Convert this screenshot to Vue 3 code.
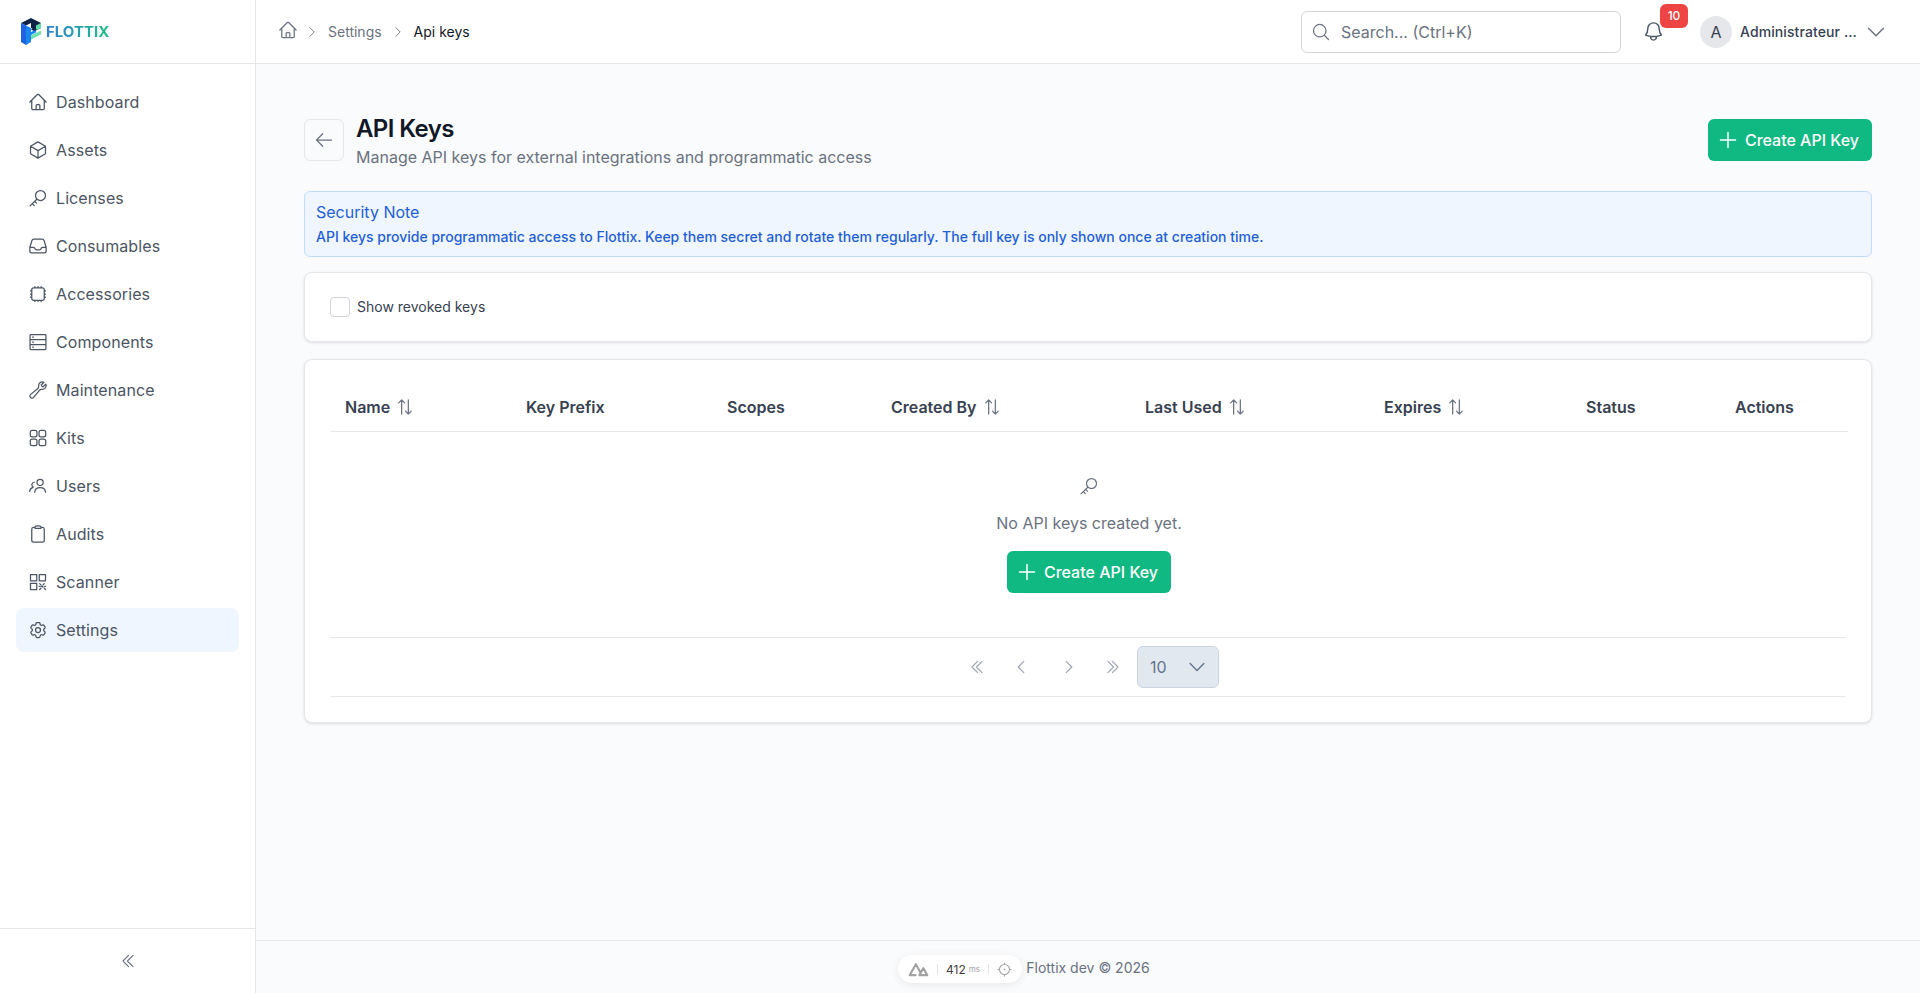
<script setup>
import { ref } from 'vue'

const nav = [
  { label: 'Dashboard', icon: 'home' },
  { label: 'Assets', icon: 'cube' },
  { label: 'Licenses', icon: 'key' },
  { label: 'Consumables', icon: 'inbox' },
  { label: 'Accessories', icon: 'chip' },
  { label: 'Components', icon: 'stack' },
  { label: 'Maintenance', icon: 'wrench' },
  { label: 'Kits', icon: 'grid' },
  { label: 'Users', icon: 'users' },
  { label: 'Audits', icon: 'clipboard' },
  { label: 'Scanner', icon: 'qr' },
  { label: 'Settings', icon: 'cog', active: true }
]

const icons = {
  home: 'm2.25 12 8.954-8.955c.44-.439 1.152-.439 1.591 0L21.75 12M4.5 9.75v10.125c0 .621.504 1.125 1.125 1.125H9.75v-4.875c0-.621.504-1.125 1.125-1.125h2.25c.621 0 1.125.504 1.125 1.125V21h4.125c.621 0 1.125-.504 1.125-1.125V9.75M8.25 21h8.25',
  cube: 'm21 7.5-9-5.25L3 7.5m18 0-9 5.25m9-5.25v9l-9 5.25M3 7.5l9 5.25M3 7.5v9l9 5.25m0-9v9',
  key: 'M15 3a6 6 0 1 1 0 12 6 6 0 0 1 0-12ZM10.8 13.2 2.5 21.5M5.2 18.8l2.2 2.2M8 16l2.2 2.2',
  inbox: 'M2.25 13.5h3.86a2.25 2.25 0 0 1 2.012 1.244l.256.512a2.25 2.25 0 0 0 2.013 1.244h3.218a2.25 2.25 0 0 0 2.013-1.244l.256-.512a2.25 2.25 0 0 1 2.013-1.244h3.859m-19.5.338V18a2.25 2.25 0 0 0 2.25 2.25h15A2.25 2.25 0 0 0 21.75 18v-4.162c0-.224-.034-.447-.1-.661L19.24 5.338a2.25 2.25 0 0 0-2.15-1.588H6.911a2.25 2.25 0 0 0-2.15 1.588L2.35 13.177a2.25 2.25 0 0 0-.1.661Z',
  chip: 'M8.25 3v1.5M4.5 8.25H3m18 0h-1.5M4.5 12H3m18 0h-1.5m-15 3.75H3m18 0h-1.5M8.25 19.5V21M12 3v1.5m0 15V21m3.75-18v1.5m0 15V21m-9-1.5h10.5a2.25 2.25 0 0 0 2.25-2.25V6.75a2.25 2.25 0 0 0-2.25-2.25H6.75A2.25 2.25 0 0 0 4.5 6.75v10.5a2.25 2.25 0 0 0 2.25 2.25Z',
  stack: 'M3.5 3h17a1 1 0 0 1 1 1v16a1 1 0 0 1-1 1h-17a1 1 0 0 1-1-1V4a1 1 0 0 1 1-1ZM2.5 9h19M2.5 15h19M5.5 6h1M5.5 12h1M5.5 18h1',
  wrench: 'M21.75 6.75a4.5 4.5 0 0 1-4.884 4.484c-1.076-.091-2.264.071-2.95.904l-7.152 8.684a2.548 2.548 0 1 1-3.586-3.586l8.684-7.152c.833-.686.995-1.874.904-2.95a4.5 4.5 0 0 1 6.336-4.486l-3.276 3.276a3.004 3.004 0 0 0 2.25 2.25l3.276-3.276c.256.565.398 1.192.398 1.852Z',
  grid: 'M5 2.75h3.5a2.25 2.25 0 0 1 2.25 2.25v3.5a2.25 2.25 0 0 1-2.25 2.25H5A2.25 2.25 0 0 1 2.75 8.5V5A2.25 2.25 0 0 1 5 2.75ZM15.5 2.75H19A2.25 2.25 0 0 1 21.25 5v3.5A2.25 2.25 0 0 1 19 10.75h-3.5a2.25 2.25 0 0 1-2.25-2.25V5a2.25 2.25 0 0 1 2.25-2.25ZM5 13.25h3.5a2.25 2.25 0 0 1 2.25 2.25V19a2.25 2.25 0 0 1-2.25 2.25H5A2.25 2.25 0 0 1 2.75 19v-3.5A2.25 2.25 0 0 1 5 13.25ZM15.5 13.25H19a2.25 2.25 0 0 1 2.25 2.25V19A2.25 2.25 0 0 1 19 21.25h-3.5A2.25 2.25 0 0 1 13.25 19v-3.5a2.25 2.25 0 0 1 2.25-2.25Z',
  users: 'M14.5 4a3.75 3.75 0 1 1 0 7.5 3.75 3.75 0 0 1 0-7.5ZM8 19.5c.3-3.6 3-5.5 6.5-5.5s6.2 1.9 6.5 5.5M7.5 7.5a3 3 0 0 0-1.2 5.7M2 18.5c.2-2.4 1.5-4 3.5-4.6',
  clipboard: 'M15.666 3.888A2.25 2.25 0 0 0 13.5 2.25h-3c-1.03 0-1.9.693-2.166 1.638m7.332 0c.055.194.084.4.084.612v0a.75.75 0 0 1-.75.75H9a.75.75 0 0 1-.75-.75v0c0-.212.03-.418.084-.612m7.332 0c.646.049 1.288.11 1.927.184 1.1.128 1.907 1.077 1.907 2.185V19.5a2.25 2.25 0 0 1-2.25 2.25H6.75A2.25 2.25 0 0 1 4.5 19.5V6.257c0-1.108.806-2.057 1.907-2.185a48.208 48.208 0 0 1 1.927-.184',
  qr: 'M3 3h7.5v7.5H3ZM13.5 3H21v7.5h-7.5ZM3 13.5h7.5V21H3ZM14 14l1.5 1.5M19.5 14 18 15.5M16.75 16.75 16 17.5M17.25 17.25 18 18M14 21l1.5-1.5M21 21l-1.5-1.5M13.5 17.25h1M20 17.25h1',
  cog: 'M9.594 3.94c.09-.542.56-.94 1.11-.94h2.593c.55 0 1.02.398 1.11.94l.213 1.281c.063.374.313.686.645.87.074.04.147.083.22.127.325.196.72.257 1.075.124l1.217-.456a1.125 1.125 0 0 1 1.37.49l1.296 2.247a1.125 1.125 0 0 1-.26 1.431l-1.003.827c-.293.241-.438.613-.43.992a7.723 7.723 0 0 1 0 .255c-.008.378.137.75.43.991l1.004.827c.424.35.534.955.26 1.43l-1.298 2.247a1.125 1.125 0 0 1-1.369.491l-1.217-.456c-.355-.133-.75-.072-1.076.124a6.47 6.47 0 0 1-.22.128c-.331.183-.581.495-.644.869l-.213 1.281c-.09.543-.56.94-1.11.94h-2.594c-.55 0-1.019-.398-1.11-.94l-.213-1.281c-.062-.374-.312-.686-.644-.87a6.52 6.52 0 0 1-.22-.127c-.325-.196-.72-.257-1.076-.124l-1.217.456a1.125 1.125 0 0 1-1.369-.49l-1.297-2.247a1.125 1.125 0 0 1 .26-1.431l1.004-.827c.292-.24.437-.613.43-.991a6.932 6.932 0 0 1 0-.255c.007-.38-.138-.751-.43-.992l-1.004-.827a1.125 1.125 0 0 1-.26-1.43l1.297-2.247a1.125 1.125 0 0 1 1.37-.491l1.216.456c.356.133.751.072 1.076-.124.072-.044.146-.086.22-.128.332-.183.582-.495.644-.869l.214-1.28ZM15 12a3 3 0 1 1-6 0 3 3 0 0 1 6 0Z',
  bell: 'M14.857 17.082a23.848 23.848 0 0 0 5.454-1.31A8.967 8.967 0 0 1 18 9.75V9A6 6 0 0 0 6 9v.75a8.967 8.967 0 0 1-2.312 6.022c1.733.64 3.56 1.085 5.455 1.31m5.714 0a24.255 24.255 0 0 1-5.714 0m5.714 0a3 3 0 1 1-5.714 0',
  search: 'm21 21-5.197-5.197m0 0A7.5 7.5 0 1 0 5.196 5.196a7.5 7.5 0 0 0 10.607 10.607Z',
  plus: 'M12 4.5v15m7.5-7.5h-15',
  back: 'M10.5 19.5 3 12m0 0 7.5-7.5M3 12h18',
  down: 'm19.5 8.25-7.5 7.5-7.5-7.5',
  right: 'm8.25 4.5 7.5 7.5-7.5 7.5',
  left: 'M15.75 19.5 8.25 12l7.5-7.5',
  dleft: 'm18.75 4.5-7.5 7.5 7.5 7.5m-6-15L5.25 12l7.5 7.5',
  dright: 'm5.25 4.5 7.5 7.5-7.5 7.5m6-15 7.5 7.5-7.5 7.5',
  sort: 'M8 20.5V3.5M4.5 7 8 3.5 11.5 7M16 3.5v17M12.5 17l3.5 3.5 3.5-3.5'
}

const columns = [
  { label: 'Name', width: 181, sort: true },
  { label: 'Key Prefix', width: 201 },
  { label: 'Scopes', width: 164 },
  { label: 'Created By', width: 254, sort: true },
  { label: 'Last Used', width: 239, sort: true },
  { label: 'Expires', width: 202, sort: true },
  { label: 'Status', width: 149 },
  { label: 'Actions', width: 128 }
]

const showRevoked = ref(false)
</script>

<template>
  <div class="app">
    <aside class="sidebar">
      <div class="brand">
        <svg class="brand-mark" viewBox="0 0 20 28" aria-hidden="true">
          <path d="M0 5 10 0l10 5-5 2.5v0L10 5 5 7.5 0 5Z" fill="#0f2347" />
          <path d="M10 5l10 0v5l-5 2.5L10 10Z" fill="#0f2347" />
          <path d="M0 5l5 2.5V27L0 24Z" fill="#1d62e0" />
          <path d="M5 7.5l5 2.5v4l5-2.5 0 3-5 2.5v7L5 27Z" fill="#1a86f0" />
          <path d="M15 7.5l5-2.5v5l-5 2.5Z" fill="#5fe0a8" />
          <path d="M10 17.5l5-2.5 5-2.5v4l-5 2.5-5 2.5Z" fill="#6fe3ae" />
          <path d="M10 11.5l3-1.5 3 1.5-3 1.5Z" fill="#0f2347" />
        </svg>
        <span class="brand-name">FLOTTIX</span>
      </div>
      <nav class="nav">
        <a v-for="item in nav" :key="item.label" class="nav-item" :class="{ active: item.active }">
          <svg class="nav-icon" viewBox="0 0 24 24"><path :d="icons[item.icon]" /></svg>
          <span>{{ item.label }}</span>
        </a>
      </nav>
      <div class="collapse">
        <svg class="collapse-icon" viewBox="0 0 24 24"><path :d="icons.dleft" /></svg>
      </div>
    </aside>

    <div class="main">
      <header class="topbar">
        <div class="crumbs">
          <svg class="crumb-home" viewBox="0 0 24 24"><path :d="icons.home" /></svg>
          <svg class="crumb-sep" viewBox="0 0 24 24"><path :d="icons.right" /></svg>
          <span>Settings</span>
          <svg class="crumb-sep" viewBox="0 0 24 24"><path :d="icons.right" /></svg>
          <span class="crumb-current">Api keys</span>
        </div>
        <div class="top-actions">
          <label class="search">
            <svg class="search-icon" viewBox="0 0 24 24"><path :d="icons.search" /></svg>
            <input type="text" placeholder="Search... (Ctrl+K)" />
          </label>
          <div class="bell">
            <svg class="bell-icon" viewBox="0 0 24 24"><path :d="icons.bell" /></svg>
            <span class="badge">10</span>
          </div>
          <div class="user">
            <span class="avatar">A</span>
            <span class="user-name">Administrateur ...</span>
            <svg class="user-chevron" viewBox="0 0 24 24"><path :d="icons.down" /></svg>
          </div>
        </div>
      </header>

      <main class="content">
        <div class="page-head">
          <div class="page-title">
            <button class="back-btn" type="button">
              <svg viewBox="0 0 24 24"><path :d="icons.back" /></svg>
            </button>
            <div>
              <h1>API Keys</h1>
              <p>Manage API keys for external integrations and programmatic access</p>
            </div>
          </div>
          <button class="primary-btn" type="button">
            <svg viewBox="0 0 24 24"><path :d="icons.plus" /></svg>
            Create API Key
          </button>
        </div>

        <div class="note">
          <div class="note-title">Security Note</div>
          <div class="note-text">API keys provide programmatic access to Flottix. Keep them secret and rotate them regularly. The full key is only shown once at creation time.</div>
        </div>

        <section class="card filter-card">
          <label class="check">
            <input v-model="showRevoked" type="checkbox" />
            <span>Show revoked keys</span>
          </label>
        </section>

        <section class="card table-card">
          <table class="keys">
            <colgroup>
              <col v-for="col in columns" :key="col.label" :style="{ width: col.width + 'px' }" />
            </colgroup>
            <thead>
              <tr>
                <th v-for="col in columns" :key="col.label">
                  <span class="th-inner">
                    {{ col.label }}
                    <svg v-if="col.sort" class="sort-icon" viewBox="0 0 24 24"><path :d="icons.sort" /></svg>
                  </span>
                </th>
              </tr>
            </thead>
            <tbody>
              <tr>
                <td :colspan="columns.length">
                  <div class="empty">
                    <svg class="empty-icon" viewBox="0 0 24 24"><path :d="icons.key" /></svg>
                    <p>No API keys created yet.</p>
                    <button class="primary-btn" type="button">
                      <svg viewBox="0 0 24 24"><path :d="icons.plus" /></svg>
                      Create API Key
                    </button>
                  </div>
                </td>
              </tr>
            </tbody>
          </table>
          <div class="pager">
            <button type="button"><svg viewBox="0 0 24 24"><path :d="icons.dleft" /></svg></button>
            <button type="button"><svg viewBox="0 0 24 24"><path :d="icons.left" /></svg></button>
            <span class="pages"></span>
            <button type="button"><svg viewBox="0 0 24 24"><path :d="icons.right" /></svg></button>
            <button type="button"><svg viewBox="0 0 24 24"><path :d="icons.dright" /></svg></button>
            <div class="page-size">
              <span>10</span>
              <svg viewBox="0 0 24 24"><path :d="icons.down" /></svg>
            </div>
          </div>
        </section>
      </main>

      <footer class="footer">Flottix dev © 2026</footer>
    </div>

    <!-- floating dev tools pill -->
    <div class="devpill">
      <svg class="dev-logo" viewBox="0 0 24 18">
        <path d="M8.5 16H2L9 3.5l5.5 10M14 16h8L17.5 8 13 16" />
      </svg>
      <i class="dev-sep"></i>
      <span class="dev-time">412</span><span class="dev-unit">ms</span>
      <i class="dev-sep"></i>
      <svg class="dev-target" viewBox="0 0 24 24">
        <circle cx="12" cy="12" r="8" />
        <circle class="dot" cx="12" cy="12" r="1.6" />
        <path d="M12 1.5V4M12 20v2.5M1.5 12H4M20 12h2.5" />
      </svg>
    </div>
  </div>
</template>

<style>
html, body {
  margin: 0;
  height: 100%;
}
</style>

<style scoped>
.app {
  display: flex;
  height: 100vh;
  overflow: hidden;
  position: relative;
  background: #f9fbfd;
  color: #374151;
  font-family: Inter, "Liberation Sans", sans-serif;
  font-size: 16px;
}

svg {
  fill: none;
  stroke: currentColor;
  stroke-width: 1.5;
  stroke-linecap: round;
  stroke-linejoin: round;
  flex-shrink: 0;
}

.sidebar {
  width: 256px;
  box-sizing: border-box;
  flex-shrink: 0;
  display: flex;
  flex-direction: column;
  background: #fff;
  border-right: 1px solid #e5e7eb;
}

.brand {
  height: 64px;
  box-sizing: border-box;
  border-bottom: 1px solid #e5e7eb;
  display: flex;
  align-items: center;
  padding-left: 21px;
  gap: 5px;
}

.brand-mark {
  width: 20px;
  height: 28px;
  stroke: none;
}

.brand-name {
  font-size: 15px;
  font-weight: 700;
  background: linear-gradient(90deg, #2f80d8, #1fbf85);
  -webkit-background-clip: text;
  background-clip: text;
  color: transparent;
}

.nav {
  flex: 1;
  display: flex;
  flex-direction: column;
  gap: 4px;
  padding: 16px;
}

.nav-item {
  display: flex;
  align-items: center;
  gap: 8px;
  height: 44px;
  padding: 0 12px;
  border-radius: 8px;
  color: #4b5563;
  font-weight: 400;
  letter-spacing: 0.1px;
}

.nav-item.active {
  background: #eff6ff;
}

.nav-icon {
  width: 20px;
  height: 20px;
}

.collapse {
  height: 65px;
  box-sizing: border-box;
  border-top: 1px solid #e5e7eb;
  display: flex;
  align-items: center;
  justify-content: center;
  color: #6b7280;
}

.collapse-icon {
  width: 18px;
  height: 18px;
}

.main {
  flex: 1;
  min-width: 0;
  display: flex;
  flex-direction: column;
}

.topbar {
  height: 64px;
  box-sizing: border-box;
  flex-shrink: 0;
  background: #fff;
  border-bottom: 1px solid #e5e7eb;
  display: flex;
  align-items: center;
  justify-content: space-between;
  padding: 0 32px 0 22px;
}

.crumbs {
  display: flex;
  align-items: center;
  font-size: 14px;
  color: #6b7280;
}

.crumb-home {
  width: 20px;
  height: 20px;
  margin: -4px -2px 0 0;
}

.crumb-sep {
  width: 14px;
  height: 14px;
  margin: 0 9px;
}

.crumb-current {
  color: #111827;
}

.top-actions {
  display: flex;
  align-items: center;
}

.search {
  width: 320px;
  height: 42px;
  box-sizing: border-box;
  border: 1px solid #d1d5db;
  border-radius: 6px;
  background: #fff;
  display: flex;
  align-items: center;
  padding: 0 12px 0 9px;
  gap: 10px;
  color: #6b7280;
}

.search-icon {
  width: 20px;
  height: 20px;
}

.search input {
  flex: 1;
  min-width: 0;
  border: none;
  outline: none;
  background: transparent;
  font: inherit;
  font-size: 16px;
  padding: 0;
  color: #374151;
}

.search input::placeholder {
  color: #6b7280;
  opacity: 1;
}

.bell {
  position: relative;
  width: 40px;
  height: 40px;
  margin-left: 12px;
  display: flex;
  align-items: center;
  justify-content: center;
  color: #4b5563;
}

.bell-icon {
  width: 23px;
  height: 23px;
}

.badge {
  position: absolute;
  left: 27px;
  top: -8px;
  width: 28px;
  height: 24px;
  border-radius: 6px;
  background: #ef4444;
  color: #fff;
  font-size: 12px;
  font-weight: 500;
  display: flex;
  align-items: center;
  justify-content: center;
}

.user {
  display: flex;
  align-items: center;
  margin-left: 27px;
}

.avatar {
  width: 32px;
  height: 32px;
  border-radius: 50%;
  background: #e5e7eb;
  display: flex;
  align-items: center;
  justify-content: center;
  font-size: 16px;
  color: #374151;
}

.user-name {
  margin-left: 8px;
  width: 124px;
  font-size: 14px;
  font-weight: 500;
  letter-spacing: 0.1px;
  color: #374151;
  white-space: nowrap;
}

.user-chevron {
  width: 24px;
  height: 24px;
  color: #6b7280;
}

.content {
  flex: 1;
  min-height: 0;
  padding: 55px 48px 0;
  display: flex;
  flex-direction: column;
}

.page-head {
  display: flex;
  justify-content: space-between;
  align-items: flex-start;
  margin-bottom: 22px;
}

.page-title {
  display: flex;
  gap: 12px;
}

.back-btn {
  width: 40px;
  height: 42px;
  padding: 0;
  border: 1px solid #e5e7eb;
  border-radius: 6px;
  background: transparent;
  display: flex;
  align-items: center;
  justify-content: center;
  color: #6b7280;
}

.back-btn svg {
  width: 20px;
  height: 20px;
}

.page-title h1 {
  margin: -6px 0 0;
  font-size: 24px;
  line-height: 32px;
  font-weight: 600;
  letter-spacing: -0.6px;
  color: #111827;
}

.page-title p {
  margin: 0;
  font-size: 16px;
  line-height: 24px;
  color: #6b7280;
}

.primary-btn {
  height: 42px;
  box-sizing: border-box;
  padding: 0 13px 0 8px;
  display: inline-flex;
  align-items: center;
  gap: 5px;
  border: none;
  border-radius: 6px;
  background: #10b981;
  color: #fff;
  font: inherit;
  font-weight: 500;
}

.primary-btn svg {
  width: 24px;
  height: 24px;
}

.note {
  height: 66px;
  box-sizing: border-box;
  padding: 9px 11px;
  border: 1px solid #bfdbfe;
  border-radius: 6px;
  background: #eff6ff;
  color: #1f5fd6;
  margin-bottom: 15px;
}

.note-title {
  font-size: 16px;
  line-height: 22px;
}

.note-text {
  font-size: 14px;
  font-weight: 500;
  line-height: 20px;
  margin-top: 4px;
}

.card {
  background: #fff;
  border: 1px solid #e5e7eb;
  border-radius: 8px;
  box-shadow: 0 1px 3px rgba(0, 0, 0, 0.12);
  box-sizing: border-box;
}

.filter-card {
  height: 70px;
  padding: 0 25px;
  display: flex;
  align-items: center;
  margin-bottom: 17px;
}

.check {
  display: flex;
  align-items: center;
  gap: 7px;
  font-size: 14px;
  font-weight: 400;
  color: #374151;
}

.check span {
  margin-top: -2px;
}

.check input {
  appearance: none;
  width: 20px;
  height: 20px;
  margin: 0;
  border: 1px solid #d1d5db;
  border-radius: 4px;
  background: #fff;
}

.table-card {
  padding: 25px;
}

.keys {
  width: 100%;
  table-layout: fixed;
  border-collapse: collapse;
}

.keys th {
  height: 46px;
  box-sizing: border-box;
  padding: 0 15px 2px;
  text-align: left;
  border-bottom: 1px solid #e5e7eb;
  font-size: 16px;
  font-weight: 600;
  color: #374151;
}

.th-inner {
  display: inline-flex;
  align-items: center;
  gap: 5px;
}

.sort-icon {
  width: 20px;
  height: 20px;
  color: #6b7280;
}

.keys td {
  padding: 0;
}

.empty {
  display: flex;
  flex-direction: column;
  align-items: center;
  padding: 44px 0;
}

.empty-icon {
  width: 20px;
  height: 20px;
  color: #6b7280;
}

.empty p {
  margin: 15px 0 16px;
  line-height: 24px;
  color: #6b7280;
}

.pager {
  border-top: 1px solid #e5e7eb;
  border-bottom: 1px solid #e5e7eb;
  padding: 8px 0;
  display: flex;
  justify-content: center;
  align-items: center;
  gap: 4px;
}

.pager button {
  width: 40px;
  height: 40px;
  padding: 0;
  border: none;
  background: transparent;
  color: #9ca3af;
  display: flex;
  align-items: center;
  justify-content: center;
}

.pager button svg {
  width: 18px;
  height: 18px;
}

.page-size {
  width: 82px;
  height: 42px;
  box-sizing: border-box;
  border: 1px solid #cbd5e1;
  border-radius: 6px;
  background: #e2e8f0;
  display: flex;
  align-items: center;
  justify-content: space-between;
  padding: 0 10px 0 12px;
  color: #64748b;
}

.page-size svg {
  width: 22px;
  height: 22px;
}

.footer {
  height: 53px;
  box-sizing: border-box;
  flex-shrink: 0;
  border-top: 1px solid #e5e7eb;
  display: flex;
  align-items: center;
  justify-content: center;
  font-size: 14px;
  color: #6b7280;
}

.devpill {
  position: absolute;
  left: 898px;
  top: 955px;
  width: 124px;
  height: 28px;
  box-sizing: border-box;
  border-radius: 14px;
  background: #fff;
  box-shadow: 0 2px 8px rgba(0, 0, 0, 0.08);
  display: flex;
  align-items: center;
  justify-content: center;
  color: #a3a3a3;
}

.dev-logo {
  width: 21px;
  height: 16px;
  stroke-width: 2.4;
}

.dev-sep {
  width: 1px;
  height: 10px;
  background: #e5e5e5;
  margin: 0 8px;
}

.dev-time {
  font-size: 12px;
  color: #404040;
}

.dev-unit {
  font-size: 8px;
  margin-left: 3px;
  color: #a3a3a3;
}

.dev-target {
  width: 15px;
  height: 15px;
  stroke-width: 1.8;
}

.dev-target .dot {
  fill: currentColor;
  stroke: none;
}
</style>
